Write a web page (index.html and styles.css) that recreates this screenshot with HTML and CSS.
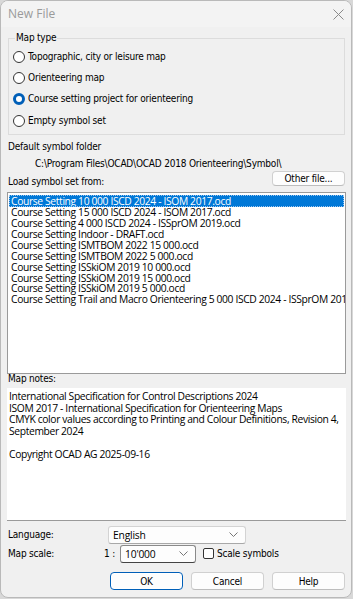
FILE: index.html
```html
<!DOCTYPE html>
<html lang="en">
<head>
    <meta charset="UTF-8">
    <title>New File</title>
    <link rel="stylesheet" href="styles.css">
</head>
<body>
    <div class="window">
        <div class="titlebar">
            <span class="title">New File</span>
            <svg class="close" width="11" height="11" viewBox="0 0 11 11">
                <path d="M0.5 0.5L10.5 10.5M10.5 0.5L0.5 10.5" stroke="#8a8a8a" stroke-width="1" fill="none"/>
            </svg>
        </div>

        <div class="content">
            <fieldset class="group">
                <legend>Map type</legend>
                <label class="radio"><span class="dot"></span>Topographic, city or leisure map</label>
                <label class="radio"><span class="dot"></span>Orienteering map</label>
                <label class="radio"><span class="dot checked"></span>Course setting project for orienteering</label>
                <label class="radio"><span class="dot"></span>Empty symbol set</label>
            </fieldset>

            <div class="label folder-label">Default symbol folder</div>
            <div class="label folder-path">C:\Program Files\OCAD\OCAD 2018 Orienteering\Symbol\</div>

            <div class="load-row">
                <span class="label load-label">Load symbol set from:</span>
                <button class="btn other">Other file...</button>
            </div>

            <div class="listbox">
                <div class="item selected">Course Setting 10 000 ISCD 2024 - ISOM 2017.ocd</div>
                <div class="item">Course Setting 15 000 ISCD 2024 - ISOM 2017.ocd</div>
                <div class="item">Course Setting 4 000 ISCD 2024 - ISSprOM 2019.ocd</div>
                <div class="item">Course Setting Indoor - DRAFT.ocd</div>
                <div class="item">Course Setting ISMTBOM 2022 15 000.ocd</div>
                <div class="item">Course Setting ISMTBOM 2022 5 000.ocd</div>
                <div class="item">Course Setting ISSkiOM 2019 10 000.ocd</div>
                <div class="item">Course Setting ISSkiOM 2019 15 000.ocd</div>
                <div class="item">Course Setting ISSkiOM 2019 5 000.ocd</div>
                <div class="item">Course Setting Trail and Macro Orienteering 5 000 ISCD 2024 - ISSprOM 2019.ocd</div>
            </div>

            <div class="label notes-label">Map notes:</div>
            <div class="notes">
                <div>International Specification for Control Descriptions 2024</div>
                <div>ISOM 2017 - International Specification for Orienteering Maps</div>
                <div>CMYK color values according to Printing and Colour Definitions, Revision 4, September 2024</div>
                <div>&nbsp;</div>
                <div>Copyright OCAD AG 2025-09-16</div>
            </div>

            <div class="form-row first">
                <span class="label lang-label">Language:</span>
                <div class="combo lang"><span>English</span><svg width="9" height="5" viewBox="0 0 9 5"><path d="M0.5 0.5L4.5 4.5L8.5 0.5" stroke="#777" fill="none"/></svg></div>
            </div>
            <div class="form-row">
                <span class="label scale-label">Map scale:</span>
                <span class="label ratio">1 :</span>
                <div class="combo scale"><span>10'000</span><svg width="9" height="5" viewBox="0 0 9 5"><path d="M0.5 0.5L4.5 4.5L8.5 0.5" stroke="#777" fill="none"/></svg></div>
                <label class="check"><span class="box"></span>Scale symbols</label>
            </div>

            <div class="buttons">
                <button class="btn default">OK</button>
                <button class="btn">Cancel</button>
                <button class="btn">Help</button>
            </div>
        </div>
    </div>
</body>
</html>
```

FILE: styles.css
```css
* {
    box-sizing: border-box;
}

body {
    margin: 0;
    background-color: #d8d8d8;
    font-family: "DejaVu Sans Condensed", "DejaVu Sans", Tahoma, sans-serif;
    font-size: 10px;
    line-height: 12px;
    letter-spacing: -0.2px;
    color: #000;
}

.window {
    width: 352px;
    height: 598px;
    border: 1px solid #b9b9b9;
    border-radius: 8px;
    background-color: #f0f0f0;
    overflow: hidden;
}

.titlebar {
    height: 26px;
    background-color: #f3f3f3;
    display: flex;
    align-items: center;
    justify-content: space-between;
    padding: 0 7px 0 7px;
}

.title {
    font-family: "Open Sans", "Noto Sans", sans-serif;
    font-size: 12px;
    letter-spacing: 0;
    color: #9a9a9a;
}

.content {
    padding: 5px 6px 0 6px;
}

.label {
    white-space: nowrap;
}

.group {
    margin: 0 0 0 1px;
    padding: 2px 0 3px 5px;
    border: 1px solid #dcdcdc;
    width: 337px;
}

.group legend {
    padding: 0 1px;
    margin-left: 1px;
}

.radio {
    display: flex;
    align-items: center;
    height: 21.3px;
}

.dot {
    width: 12px;
    height: 12px;
    border: 1px solid #333;
    border-radius: 50%;
    margin-right: 3px;
    margin-left: -1px;
    background: #fff;
}

.dot.checked {
    border: 3.5px solid #005fb8;
}

.folder-label {
    margin-top: 6px;
    margin-left: 1px;
}

.folder-path {
    margin-top: 5px;
    margin-left: 28px;
}

.load-row {
    display: flex;
    justify-content: space-between;
    height: 17px;
    margin-top: 1px;
    margin-left: 1px;
}

.load-label {
    align-self: flex-end;
}

.btn {
    font-family: "DejaVu Sans Condensed", "DejaVu Sans", Tahoma, sans-serif;
    font-size: 10px;
    letter-spacing: -0.2px;
    width: 73px;
    height: 18px;
    background: #fdfdfd;
    border: 1px solid #d0d0d0;
    border-bottom-color: #bdbdbd;
    border-radius: 4px;
    padding: 0;
    color: #000;
}

.btn.other {
    height: 15px;
}

.listbox {
    margin-top: 4px;
    width: 339px;
    height: 182px;
    background: #fff;
    border: 1px solid #9a9a9a;
    padding: 2px 1px 1px 1px;
    overflow: hidden;
    font-family: "Open Sans", "Noto Sans", sans-serif;
    font-size: 10.3px;
    letter-spacing: -0.36px;
}

.item {
    height: 10.9px;
    line-height: 10.9px;
    padding-left: 2px;
    white-space: nowrap;
}

.item.selected {
    background: #0078d7;
    color: #fff;
    height: 12px;
    line-height: 12px;
    outline: 1px dotted #9cc6ef;
    outline-offset: -1px;
}

.notes-label {
    margin-top: -1px;
    margin-left: 1px;
}

.notes {
    margin-top: 3px;
    width: 339px;
    height: 133px;
    background: #fff;
    border-bottom: 1px solid #9a9a9a;
    padding: 3px 2px 5px 2px;
    font-family: "Open Sans", "Noto Sans", sans-serif;
    font-size: 10.3px;
    line-height: 11.6px;
    letter-spacing: -0.36px;
}

.form-row {
    display: flex;
    align-items: center;
    height: 19px;
    margin-left: 1px;
}

.form-row.first {
    margin-top: 4px;
}

.lang-label {
    width: 100px;
}

.scale-label {
    width: 96px;
}

.ratio {
    width: 16px;
}

.combo {
    height: 18px;
    background: #fdfdfd;
    border: 1px solid #d3d3d3;
    border-bottom-color: #a8a8a8;
    border-radius: 3px;
    display: flex;
    align-items: center;
    justify-content: space-between;
    padding: 0 7px 0 4px;
    font-family: "Open Sans", "Noto Sans", sans-serif;
    font-size: 10.3px;
    letter-spacing: -0.2px;
}

.combo.lang {
    width: 138px;
}

.combo.scale {
    width: 76px;
    border-color: #8a8a8a;
    border-bottom-color: #444;
}

.check {
    display: flex;
    align-items: center;
    margin-left: 7px;
}

.box {
    width: 11px;
    height: 11px;
    border: 1px solid #333;
    border-radius: 2px;
    margin-right: 3px;
    background: #fff;
}

.buttons {
    display: flex;
    justify-content: flex-end;
    gap: 8px;
    margin-top: 9px;
    margin-right: 0;
}

.btn.default {
    border: 1px solid #005fb8;
    box-shadow: inset 0 0 0 1px #fff;
}
```
